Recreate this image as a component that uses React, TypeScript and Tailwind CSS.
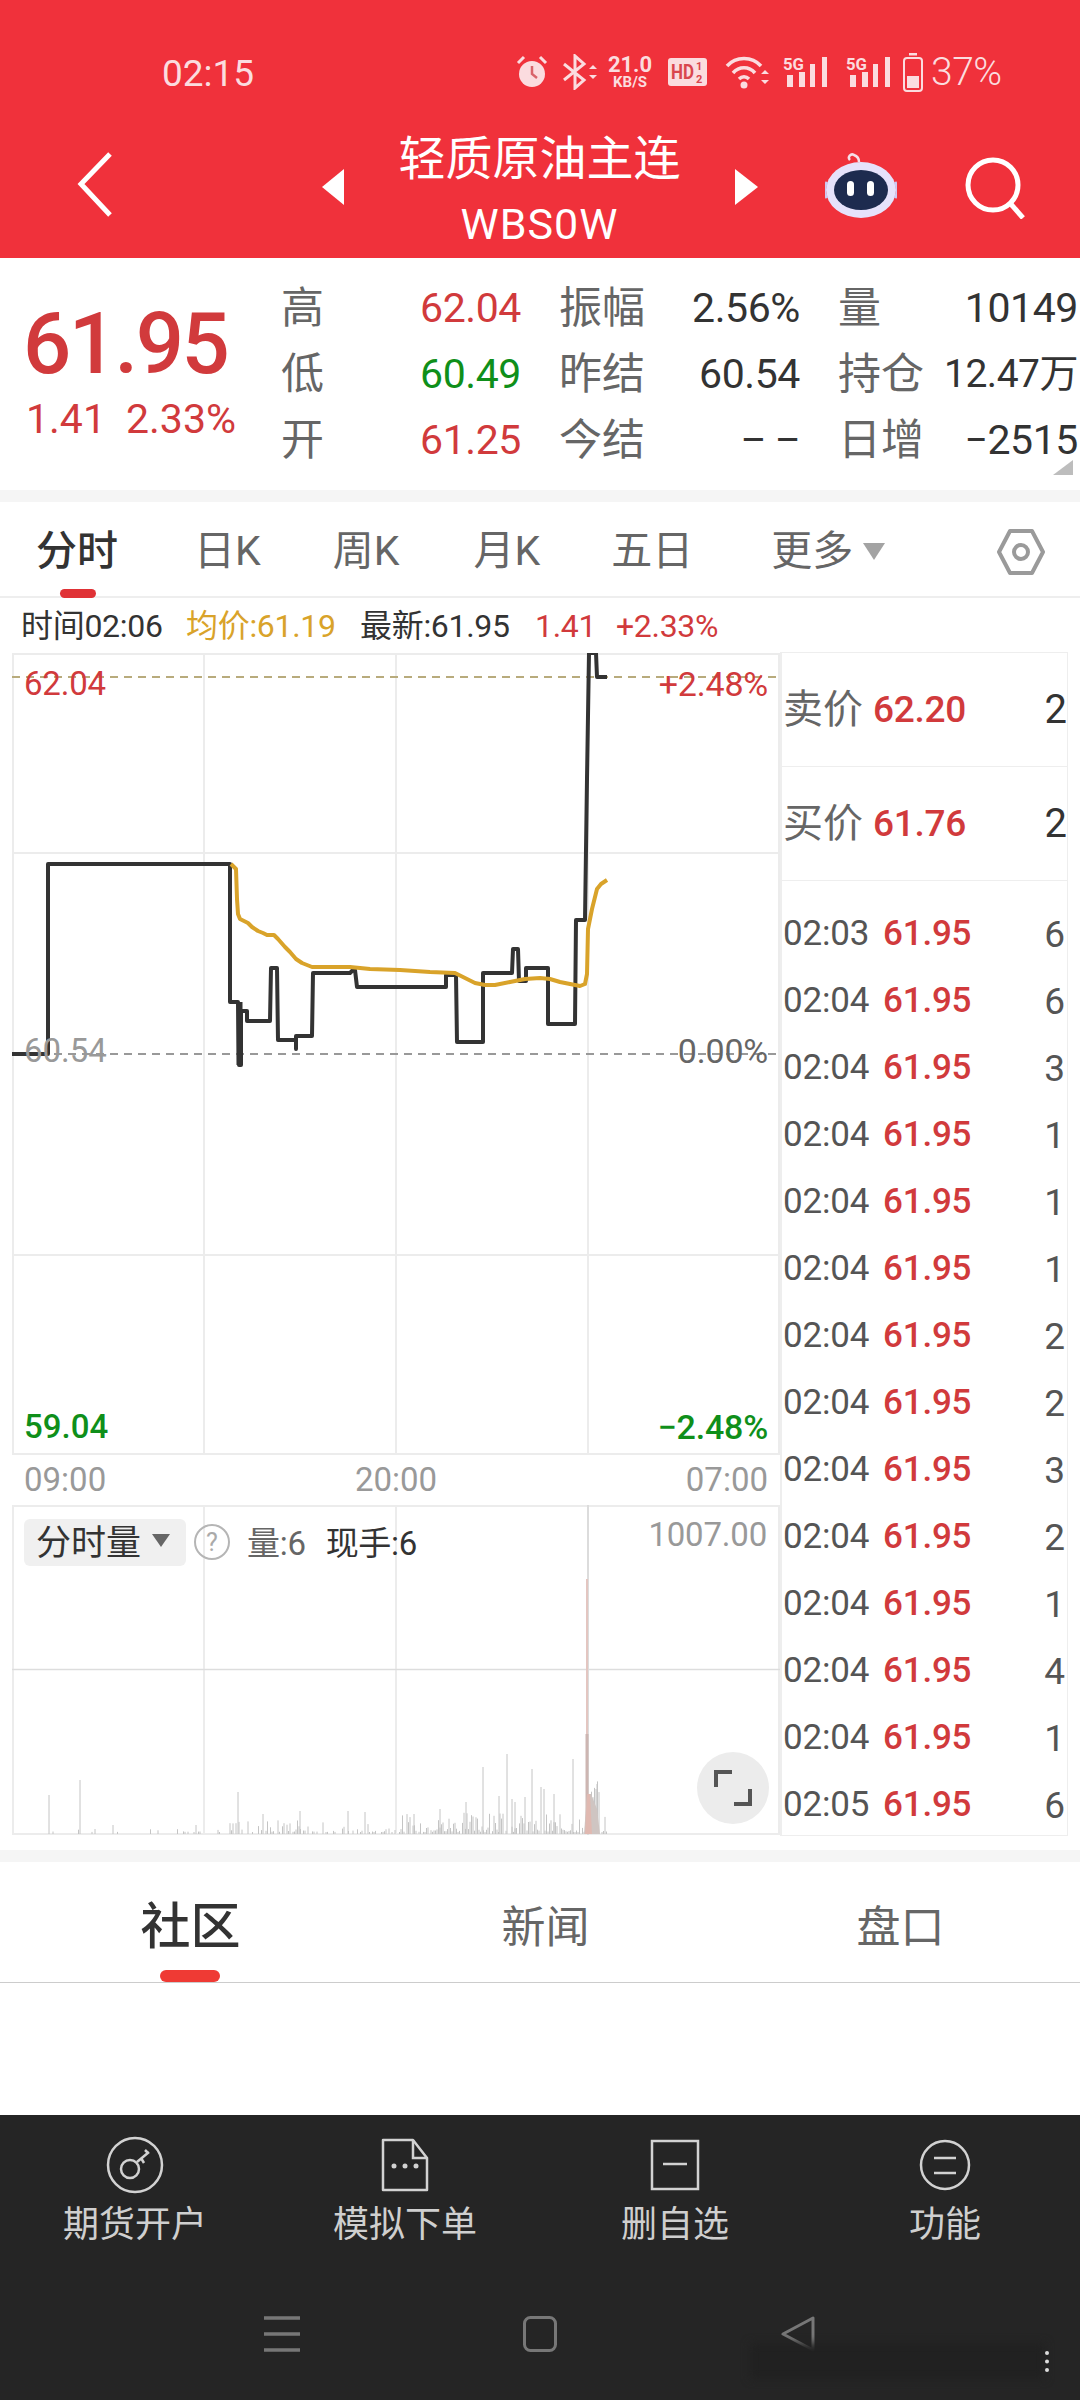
import React from "react";

const RED = "text-[#d13a3c]";
const GREEN = "text-[#0f8f1a]";

const pricePts =
  "12,1055 48,1055 48,865 230,865 230,1003 238,1003 239,1066 241,1066 241,1012 247,1012 247,1022 270,1022 271,969 277,969 278,1041 296,1041 296,1050 296,1037 312,1037 313,974 350,974 353,971 355,971 357,988 446,988 446,976 456,976 457,1043 483,1043 483,974 512,974 513,950 518,950 519,982 526,982 526,969 548,969 548,1025 575,1025 576,921 585,921 587,780 589,654 596,654 597,678 607,678";
const avgPts =
  "231,865 236,870 237,900 238,915 240,920 248,924 252,928 258,932 263,934 267,936 274,936 278,940 285,948 290,953 296,960 302,964 312,968 350,968 370,970 400,971 430,973 455,974 463,978 475,984 485,986 495,986 510,983 525,980 540,979 550,980 560,983 570,985 580,987 585,985 587,975 588,930 592,910 597,890 601,885 607,881";

function buildBars() {
  let seed = 17;
  const rnd = () => {
    seed = (seed * 9301 + 49297) % 233280;
    return seed / 233280;
  };
  let d = "";
  for (let x = 50; x < 607; x += 1.5) {
    const density = x < 230 ? 0.1 : x < 400 ? 0.5 : 0.85;
    if (rnd() > density) continue;
    const max = x < 230 ? 3 : x < 400 ? 12 : 20;
    const r = rnd();
    const h = 2 + r * r * max + (x > 588 && x < 602 ? 20 + rnd() * 14 : 0);
    d += `M${x} 1835V${(1835 - h).toFixed(1)}`;
  }
  const tall: [number, number][] = [
    [49, 1796], [80, 1781], [113, 1826], [196, 1826], [238, 1793], [263, 1815], [300, 1812], [348, 1812],
    [365, 1813], [414, 1815], [440, 1810], [466, 1803], [483, 1768], [499, 1797], [507, 1755], [512, 1800],
    [515, 1803], [525, 1798], [532, 1770], [541, 1788], [544, 1790], [554, 1795], [573, 1760], [597, 1785],
  ];
  for (const [x, y] of tall) d += `M${x} 1835V${y}`;
  return d;
}
const barsPath = buildBars();

const ticks = [
  ["02:03", "6"], ["02:04", "6"], ["02:04", "3"], ["02:04", "1"], ["02:04", "1"], ["02:04", "1"], ["02:04", "2"],
  ["02:04", "2"], ["02:04", "3"], ["02:04", "2"], ["02:04", "1"], ["02:04", "4"], ["02:04", "1"], ["02:05", "6"],
];

function Bars5G() {
  return (
    <svg width="45" height="34" viewBox="0 0 45 34" className="shrink-0">
      <text x="0" y="15" fontSize="16" fontWeight="700" fill="#fbdcdf" fontFamily="Roboto" textLength="21" lengthAdjust="spacingAndGlyphs">5G</text>
      <rect x="4" y="20" width="6" height="12" fill="#fbdcdf" />
      <rect x="16" y="17" width="6" height="15" fill="#fbdcdf" />
      <rect x="27" y="9" width="5" height="23" fill="#fbdcdf" />
      <rect x="39" y="2" width="5" height="30" fill="#fbdcdf" />
    </svg>
  );
}

function StatusBar() {
  return (
    <div className="h-[116px] pt-[50px] pl-[162px] flex items-start text-[#fbdcdf]">
      <div className="w-[94px] h-[44px] leading-[48px] text-[37px] shrink-0">02:15</div>
      <div className="ml-[260px] flex items-center h-[44px]">
        <svg width="32" height="34" viewBox="0 0 32 34" className="shrink-0">
          <circle cx="16" cy="19" r="13" fill="#fbdcdf" />
          <path d="M16 11v8l5 4" stroke="#d9646b" strokeWidth="2.5" fill="none" />
          <path d="M2 8l6-6M30 8l-6-6" stroke="#fbdcdf" strokeWidth="3" fill="none" />
        </svg>
        <svg width="35" height="36" viewBox="0 0 35 36" className="ml-[14px] shrink-0">
          <path d="M2 10l20 16-9 8V2l9 8-20 16" stroke="#fbdcdf" strokeWidth="3" fill="none" />
          <path d="M27 15l4-4 4 4zM27 21l4 4 4-4z" fill="#fbdcdf" />
        </svg>
        <div className="ml-[11px] w-[44px] flex flex-col items-center shrink-0 font-bold">
          <div className="text-[22px] leading-[20px]">21.0</div>
          <div className="text-[15px] leading-[15px]">KB/S</div>
        </div>
        <svg width="39" height="28" viewBox="0 0 39 28" className="ml-[16px] shrink-0">
          <rect width="39" height="28" rx="3" fill="#fbdcdf" />
          <text x="3" y="21" fontSize="20" fontWeight="700" fill="#d9464e" fontFamily="Roboto" textLength="23" lengthAdjust="spacingAndGlyphs">HD</text>
          <text x="28" y="12" fontSize="11" fontWeight="700" fill="#d9464e" fontFamily="Roboto">1</text>
          <text x="28" y="25" fontSize="11" fontWeight="700" fill="#d9464e" fontFamily="Roboto">2</text>
        </svg>
        <svg width="44" height="34" viewBox="0 0 44 34" className="ml-[18px] shrink-0">
          <path d="M2 11C11 1 27 1 36 11M8 18c6-7 16-7 22 0M14 24c3-3 7-3 10 0" stroke="#fbdcdf" strokeWidth="3.5" fill="none" />
          <circle cx="19" cy="30" r="3.5" fill="#fbdcdf" />
          <path d="M36 19l4-4 4 4zM36 25l4 4 4-4z" fill="#fbdcdf" />
        </svg>
        <div className="ml-[14px] shrink-0"><Bars5G /></div>
        <div className="ml-[18px] shrink-0"><Bars5G /></div>
        <svg width="20" height="39" viewBox="0 0 20 39" className="ml-[12px] shrink-0">
          <rect x="6" y="0" width="8" height="2.5" fill="#fbdcdf" />
          <rect x="1" y="5" width="18" height="33" rx="3" stroke="#fbdcdf" strokeWidth="2" fill="none" />
          <rect x="4" y="23" width="12" height="12" fill="#fbdcdf" />
        </svg>
        <div className="ml-[8px] text-[39px] leading-[48px] font-light tracking-[-0.5px] shrink-0">37%</div>
      </div>
    </div>
  );
}

function NavRow() {
  return (
    <div className="h-[142px] flex items-start">
      <svg width="36" height="65" viewBox="0 0 36 65" className="ml-[77px] mt-[36px] shrink-0">
        <path d="M33 2L4 32l29 31" stroke="#fff" strokeWidth="5" fill="none" />
      </svg>
      <svg width="22" height="36" viewBox="0 0 22 36" className="ml-[209px] mt-[53px] shrink-0">
        <path d="M22 0v36L0 18z" fill="#fff" />
      </svg>
      <div className="w-[391px] shrink-0 flex flex-col items-center text-white">
        <div className="h-[60px] leading-[60px] text-[47px] mt-[13px]">轻质原油主连</div>
        <div className="h-[50px] leading-[50px] text-[43px] mt-[10px] tracking-[1px]">WBS0W</div>
      </div>
      <svg width="23" height="36" viewBox="0 0 23 36" className="mt-[53px] shrink-0">
        <path d="M0 0v36l23-18z" fill="#fff" />
      </svg>
      <svg width="72" height="66" viewBox="0 0 72 66" className="ml-[67px] mt-[36px] shrink-0">
        <path d="M25 8c-3-3 1-7 4-5 3 1 5 3 5 7" stroke="#f6dfe8" strokeWidth="2.5" fill="none" />
        <ellipse cx="36" cy="38" rx="35" ry="28" fill="#e6e2fb" />
        <path d="M2 30c-3 5-3 11 0 16M70 30c3 5 3 11 0 16" stroke="#cfc9f2" strokeWidth="3" fill="none" />
        <ellipse cx="36" cy="38" rx="27" ry="20" fill="#1d2b4f" />
        <rect x="22" y="29" width="7" height="15" rx="3.5" fill="#fff" />
        <rect x="42" y="29" width="7" height="15" rx="3.5" fill="#fff" />
      </svg>
      <svg width="60" height="62" viewBox="0 0 60 62" className="ml-[68px] mt-[41px] shrink-0">
        <circle cx="28" cy="28" r="25" stroke="#fff" strokeWidth="5" fill="none" />
        <path d="M45 46l13 15" stroke="#fff" strokeWidth="5" fill="none" />
      </svg>
    </div>
  );
}

function InfoCell({ label, value, color = "text-[#333]", small }: { label: string; value: string; color?: string; small?: boolean }) {
  return (
    <div className="flex justify-between items-center h-[66px] leading-[66px]">
      <span className="text-[43px] text-[#666]">{label}</span>
      <span className={`${small ? "text-[39px] tracking-[-0.5px]" : "text-[41px] tracking-[-0.4px]"} ${color}`}>{value}</span>
    </div>
  );
}

function InfoPanel() {
  return (
    <div className="relative h-[232px] bg-white flex">
      <div className="w-[281px] shrink-0 pl-[23px] pt-[46px]">
        <div className={`h-[80px] leading-[80px] text-[85px] tracking-[-2.5px] font-medium ${RED}`}>61.95</div>
        <div className={`mt-[13px] flex text-[41px] h-[44px] leading-[44px] ${RED}`}>
          <span className="w-[100px] ml-[3px]">1.41</span>
          <span>2.33%</span>
        </div>
      </div>
      <div className="pt-[17px] grid grid-cols-[240px_241px_240px] auto-rows-[66px] content-start gap-x-[38px] w-[799px]">
        <InfoCell label="高" value="62.04" color={RED} />
        <InfoCell label="振幅" value="2.56%" />
        <InfoCell label="量" value="10149" />
        <InfoCell label="低" value="60.49" color={GREEN} />
        <InfoCell label="昨结" value="60.54" />
        <InfoCell label="持仓" value="12.47万" small />
        <InfoCell label="开" value="61.25" color={RED} />
        <InfoCell label="今结" value="– –" small />
        <InfoCell label="日增" value="−2515" />
      </div>
      <div className="absolute left-[1053px] top-[202px] w-0 h-0 border-l-[20px] border-l-transparent border-b-[15px] border-b-[#bdbdbd]" />
    </div>
  );
}

function PeriodTabs() {
  const items: [string, string][] = [["日K", "ml-[76px]"], ["周K", "ml-[72px]"], ["月K", "ml-[74px]"], ["五日", "ml-[71px]"]];
  return (
    <div className="relative h-[96px] flex items-center pt-[5px] border-b-2 border-[#eeeeee] bg-white">
      <span className="ml-[36px] text-[41px] text-[#333] font-medium">分时</span>
      {items.map(([t, m]) => (
        <span key={t} className={`${m} text-[41px] text-[#666]`}>{t}</span>
      ))}
      <span className="ml-[78px] text-[41px] text-[#666]">更多</span>
      <svg width="22" height="17" viewBox="0 0 22 17" className="ml-[10px]">
        <path d="M0 0h22L11 17z" fill="#a3a3a3" />
      </svg>
      <svg width="48" height="46" viewBox="0 0 48 46" className="ml-[112px]">
        <path d="M13 2h22l11 21-11 21H13L2 23z" stroke="#9a9a9a" strokeWidth="4" strokeLinejoin="round" fill="none" />
        <circle cx="24" cy="23" r="7" stroke="#9a9a9a" strokeWidth="4" fill="none" />
      </svg>
      <div className="absolute left-[60px] bottom-[-2px] w-[36px] h-[9px] rounded-full bg-[#e03236]" />
    </div>
  );
}

function Legend() {
  return (
    <div className="h-[55px] flex items-center text-[32px] leading-none tracking-[-0.3px] pl-[21px] pt-[1px] bg-white">
      <span className="text-[#333] w-[165px] shrink-0">时间02:06</span>
      <span className="text-[#d9a32a] w-[174px] shrink-0">均价:61.19</span>
      <span className="text-[#333] w-[175px] shrink-0">最新:61.95</span>
      <span className={`${RED} w-[81px] shrink-0`}>1.41</span>
      <span className={RED}>+2.33%</span>
    </div>
  );
}

function MainChart() {
  return (
    <div className="relative h-[802px] w-[768px]">
      <svg width="768" height="802" viewBox="12 654 768 802" className="absolute inset-0">
        <g stroke="#ececec" strokeWidth="2" fill="none">
          <path d="M12 655H780M12 854H780M12 1256H780M12 1455H780M13 654V1456M204 654V1456M396 654V1456M588 654V1456M779 654V1456" />
        </g>
        <path d="M12 678H780" stroke="#b8ab7c" strokeWidth="2" strokeDasharray="8 6" />
        <path d="M12 1055H780" stroke="#999" strokeWidth="2" strokeDasharray="8 6" />
        <polyline points={pricePts} fill="none" stroke="#333" strokeWidth="4" strokeLinejoin="round" />
        <path d="M239.5 1003V1066" stroke="#333" strokeWidth="6" />
        <polyline points={avgPts} fill="none" stroke="#d9a32a" strokeWidth="4" strokeLinejoin="round" />
      </svg>
      <span className={`absolute left-[12px] top-[11px] text-[33px] leading-[40px] tracking-[-0.2px] ${RED}`}>62.04</span>
      <span className={`absolute right-[12px] top-[11px] text-[34px] leading-[40px] tracking-[-0.2px] ${RED}`}>+2.48%</span>
      <span className="absolute left-[12px] top-[378px] text-[33px] leading-[40px] text-[#999]">60.54</span>
      <span className="absolute right-[12px] top-[378px] text-[34px] leading-[40px] tracking-[-0.2px] text-[#666]">0.00%</span>
      <span className={`absolute left-[12px] top-[754px] text-[33px] leading-[40px] font-medium ${GREEN}`}>59.04</span>
      <span className={`absolute right-[12px] top-[754px] text-[34px] leading-[40px] tracking-[-0.2px] font-medium ${GREEN}`}>−2.48%</span>
    </div>
  );
}

function Axis() {
  return (
    <div className="h-[50px] w-[768px] flex justify-between items-center px-[12px] text-[33px] text-[#999]">
      <span>09:00</span>
      <span>20:00</span>
      <span>07:00</span>
    </div>
  );
}

function VolumeChart() {
  return (
    <div className="relative h-[330px] w-[768px]">
      <svg width="768" height="330" viewBox="12 1506 768 330" className="absolute inset-0">
        <path d="M12 1507H780M12 1835H780M13 1506V1836M204 1506V1836M396 1506V1836M779 1506V1836" stroke="#ececec" strokeWidth="2" fill="none" />
        <path d="M12 1670.5H780" stroke="#dddddd" strokeWidth="1.5" fill="none" />
        <path d="M588 1506V1836" stroke="#dcdcdc" strokeWidth="2" fill="none" />
        <path d={barsPath} stroke="#c4c4c4" strokeWidth="1" fill="none" />
        <path d="M587 1835V1580" stroke="#e3c6c1" strokeWidth="2" />
        <path d="M587 1835V1735" stroke="#cdb6b2" strokeWidth="3" />
        <path d="M584 1835L587 1795 591 1795 597 1810 600 1835z" fill="#cfc5c2" />
        <path d="M585 1835L587 1795 590 1795 592 1835z" fill="#e0b9b1" />
      </svg>
      <div className="relative flex items-center pt-[11px] pl-[12px]">
        <div className="flex items-center h-[47px] w-[162px] bg-[#f0f0f0] rounded-[6px] pl-[12px] leading-[47px]">
          <span className="text-[35px] text-[#333] pt-[3px]">分时量</span>
          <svg width="18" height="13" viewBox="0 0 18 13" className="ml-[11px] -mt-[3px]">
            <path d="M0 0h18L9 13z" fill="#666" />
          </svg>
        </div>
        <div className="ml-[8px] w-[36px] h-[36px] rounded-full border-2 border-[#b5b5b5] flex items-center justify-center text-[25px] leading-none text-[#aaa]">?</div>
        <span className="ml-[17px] text-[33px] text-[#666] tracking-[-0.3px] pt-[3px]">量:6</span>
        <span className="ml-[20px] text-[33px] text-[#333] tracking-[-0.3px] pt-[3px]">现手:6</span>
      </div>
      <span className="absolute right-[13px] top-[10px] text-[33px] leading-[40px] text-[#999] tracking-[-0.2px]">1007.00</span>
      <div className="absolute left-[685px] top-[247px] w-[72px] h-[72px] rounded-full bg-[#ececec] flex items-center justify-center">
        <svg width="38" height="38" viewBox="0 0 38 38">
          <path d="M2 18V3h16M36 20v15H20" stroke="#555" strokeWidth="4" fill="none" />
        </svg>
      </div>
    </div>
  );
}

function SidePanel() {
  return (
    <div className="w-[288px] h-[1184px] shrink-0 border border-[#eeeeee] border-l-2 -mt-[1px]">
      {[["卖价", "62.20"], ["买价", "61.76"]].map(([l, p]) => (
        <div key={l} className="h-[114px] flex items-center justify-between pl-[1px] pt-[1px] border-b border-[#eeeeee]">
          <span className="flex items-center">
            <span className="text-[40px] text-[#666]">{l}</span>
            <span className={`ml-[10px] text-[37px] font-medium tracking-[-0.3px] ${RED}`}>{p}</span>
          </span>
          <span className="text-[40px] text-[#333]">2</span>
        </div>
      ))}
      <div className="pt-[20px]">
        {ticks.map(([t, q], i) => (
          <div key={i} className="h-[67px] flex items-center pl-[1px] pr-[2px] text-[35px]">
            <span className="w-[100px] text-[#555] tracking-[-0.2px]">{t}</span>
            <span className={`font-medium tracking-[-0.2px] ${RED}`}>61.95</span>
            <span className="ml-auto text-[37px] text-[#555]">{q}</span>
          </div>
        ))}
      </div>
    </div>
  );
}

function NewsTabs() {
  return (
    <div className="relative h-[121px] grid grid-cols-[355px_355px_355px] pl-[13px] border-b border-[#cccccc] items-center pt-[11px]">
      <div className="text-center text-[50px] font-medium text-[#333]">社区</div>
      <div className="text-center text-[44px] text-[#666]">新闻</div>
      <div className="text-center text-[44px] text-[#666]">盘口</div>
      <div className="absolute left-[160px] bottom-0 w-[60px] h-[12px] rounded-full bg-[#ef3a34]" />
    </div>
  );
}

function BottomBar() {
  const c = "#d2d2d2";
  return (
    <div className="relative h-[285px] bg-[#252525]">
      <div className="grid grid-cols-4 pt-[21px]">
        <div className="flex flex-col items-center">
          <svg width="58" height="58" viewBox="0 0 58 58">
            <circle cx="29" cy="29" r="27" stroke={c} strokeWidth="2.5" fill="none" />
            <circle cx="24" cy="33" r="9" stroke={c} strokeWidth="2.5" fill="none" />
            <path d="M31 26l12-10M35 22l3 5M42 17l-3-3" stroke={c} strokeWidth="2.5" fill="none" />
          </svg>
          <span className="mt-[6px] text-[36px] leading-[50px] text-[#cfcfcf]">期货开户</span>
        </div>
        <div className="flex flex-col items-center">
          <svg width="48" height="58" viewBox="0 0 48 58">
            <path d="M2 4h30l14 18v32H2z" stroke={c} strokeWidth="2.5" strokeLinejoin="round" fill="none" />
            <path d="M32 4v18h14" stroke={c} strokeWidth="2.5" fill="none" />
            <circle cx="13" cy="30" r="2.5" fill={c} />
            <circle cx="24" cy="30" r="2.5" fill={c} />
            <circle cx="35" cy="30" r="2.5" fill={c} />
          </svg>
          <span className="mt-[6px] text-[36px] leading-[50px] text-[#cfcfcf]">模拟下单</span>
        </div>
        <div className="flex flex-col items-center">
          <svg width="50" height="58" viewBox="0 0 50 58">
            <rect x="2" y="5" width="46" height="48" stroke={c} strokeWidth="2.5" fill="none" />
            <path d="M13 28h24" stroke={c} strokeWidth="2.5" />
          </svg>
          <span className="mt-[6px] text-[36px] leading-[50px] text-[#cfcfcf]">删自选</span>
        </div>
        <div className="flex flex-col items-center">
          <svg width="52" height="58" viewBox="0 0 52 58">
            <circle cx="26" cy="29" r="24" stroke={c} strokeWidth="2.5" fill="none" />
            <path d="M15 22h22M15 37h22" stroke={c} strokeWidth="2.5" />
          </svg>
          <span className="mt-[6px] text-[36px] leading-[50px] text-[#cfcfcf]">功能</span>
        </div>
      </div>
      <div className="flex justify-center mt-[66px]">
        <div className="w-[258px] flex justify-center">
          <svg width="36" height="36" viewBox="0 0 36 36">
            <path d="M0 2h36M0 18h36M0 34h36" stroke="#777" strokeWidth="3.5" />
          </svg>
        </div>
        <div className="w-[258px] flex justify-center">
          <svg width="34" height="36" viewBox="0 0 34 36">
            <rect x="1.5" y="1.5" width="31" height="33" rx="6" stroke="#777" strokeWidth="3" fill="none" />
          </svg>
        </div>
        <div className="w-[258px] flex justify-center">
          <svg width="34" height="36" viewBox="0 0 34 36">
            <path d="M32 2v32L2 18z" stroke="#777" strokeWidth="3" strokeLinejoin="round" fill="none" />
          </svg>
        </div>
      </div>
      <div className="absolute left-[750px] top-[228px] w-[295px] h-[36px] bg-[#212121] blur-[4px]" />
      <div className="absolute left-[1045px] top-[236px] w-[5px] h-[21px] border-l-4 border-dotted border-[#dddddd]" />
    </div>
  );
}

export default function App() {
  return (
    <div className="w-[1080px] h-[2400px] overflow-hidden bg-white flex flex-col [font-family:Roboto,'Noto_Sans_CJK_SC',sans-serif]">
      <div className="h-[258px] bg-[#f0313b] shrink-0">
        <StatusBar />
        <NavRow />
      </div>
      <InfoPanel />
      <div className="h-[12px] bg-[#f5f5f5] shrink-0" />
      <PeriodTabs />
      <Legend />
      <div className="flex pl-[12px]">
        <div className="w-[768px] shrink-0">
          <MainChart />
          <Axis />
          <VolumeChart />
        </div>
        <SidePanel />
      </div>
      <div className="mt-[14px] h-[12px] bg-[#f5f5f5] shrink-0" />
      <NewsTabs />
      <div className="flex-1" />
      <BottomBar />
    </div>
  );
}
